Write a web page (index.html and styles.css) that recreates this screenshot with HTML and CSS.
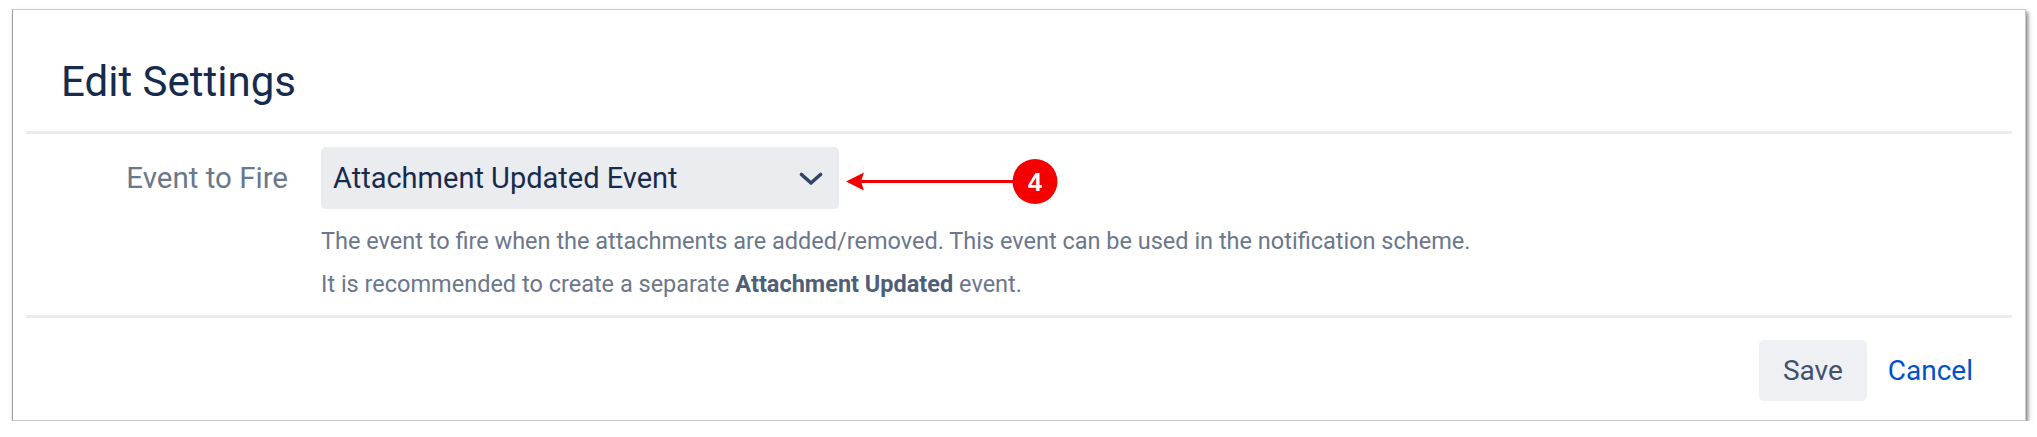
FILE: index.html
```html
<!DOCTYPE html>
<html lang="en">
<head>
<meta charset="utf-8">
<title>Edit Settings</title>
<link rel="stylesheet" href="styles.css">
</head>
<body>
<div class="dialog">
  <header class="dialog-header">
    <h2 class="dialog-title">Edit Settings</h2>
  </header>
  <div class="divider"></div>
  <div class="dialog-body">
    <div class="field-row">
      <label class="field-label">Event to Fire</label>
      <div class="field">
        <div class="select-wrap">
          <div class="select">
            <span class="select-value">Attachment Updated Event</span>
            <svg class="chevron" width="24" height="14" viewBox="0 0 24 14" aria-hidden="true">
              <path d="M2.5 2.5 L12 11 L21.5 2.5" fill="none" stroke="#344563" stroke-width="3.6" stroke-linecap="round" stroke-linejoin="round"/>
            </svg>
          </div>
          <svg class="callout" width="222" height="54" viewBox="0 0 222 54" aria-hidden="true">
            <line x1="16" y1="26.5" x2="172" y2="26.5" stroke="#f20000" stroke-width="3"/>
            <polygon points="4,26.5 22,17.5 19,26.5 22,35.5" fill="#f20000"/>
            <circle cx="193" cy="26.5" r="22.5" fill="#f50000"/>
            <text x="193" y="35.5" text-anchor="middle" class="callout-num">4</text>
          </svg>
        </div>
        <p class="help">The event to fire when the attachments are added/removed. This event can be used in the notification scheme.</p>
        <p class="help">It is recommended to create a separate <strong>Attachment Updated</strong> event.</p>
      </div>
    </div>
  </div>
  <div class="divider"></div>
  <footer class="dialog-footer">
    <button class="btn btn-default">Save</button>
    <button class="btn btn-link">Cancel</button>
  </footer>
</div>
</body>
</html>
```

FILE: styles.css
```css
html, body {
  margin: 0;
  padding: 0;
  background: #ffffff;
}

body {
  padding: 9px 11px 0 12px;
  font-family: Roboto, "Liberation Sans", Arial, sans-serif;
}

.dialog {
  background: #ffffff;
  border: 1px solid #c9c9c9;
  border-left-color: #a0a0a0;
  box-shadow: 2px 3px 4px rgba(0, 0, 0, 0.5);
  display: flex;
  flex-direction: column;
}

.dialog-header {
  padding: 48px 48px 25px 48px;
}

.dialog-title {
  margin: 0;
  font-size: 42px;
  line-height: 48px;
  font-weight: 400;
  color: #172b4d;
}

.divider {
  height: 3px;
  background: #ebecf0;
  margin: 0 13px;
}

.dialog-body {
  padding: 13px 0 9px 0;
}

.field-row {
  display: grid;
  grid-template-columns: 275px 1fr;
  column-gap: 33px;
}

.field-label {
  text-align: right;
  font-size: 29.5px;
  line-height: 62px;
  color: #6b778c;
}

.field {
  display: flex;
  flex-direction: column;
}

.select-wrap {
  position: relative;
  width: 518px;
}

.select {
  height: 62px;
  box-sizing: border-box;
  background: #ebecf0;
  border-radius: 5px;
  padding: 0 16px 0 12px;
  display: flex;
  align-items: center;
  justify-content: space-between;
}

.select-value {
  font-size: 29px;
  color: #172b4d;
}

.chevron {
  display: block;
  margin-top: 2px;
}

.callout {
  position: absolute;
  left: 521px;
  top: 8px;
}

.callout-num {
  font-family: "Liberation Sans", Arial, sans-serif;
  font-weight: 700;
  font-size: 25px;
  fill: #ffffff;
}

.help {
  margin: 0;
  font-size: 23.5px;
  line-height: 43px;
  color: #6b778c;
}

.help:first-of-type {
  margin-top: 11px;
}

.help strong {
  font-weight: 700;
  color: #505f79;
}

.dialog-footer {
  display: flex;
  justify-content: flex-end;
  align-items: center;
  padding: 22px 40px 19px 0;
}

.btn {
  font-family: Roboto, "Liberation Sans", Arial, sans-serif;
  font-size: 28px;
  height: 61px;
  border: none;
  border-radius: 5px;
  cursor: pointer;
  background: transparent;
}

.btn-default {
  background: #eff0f3;
  color: #42526e;
  padding: 0 24px;
}

.btn-link {
  color: #0052cc;
  padding: 0 12px;
  margin-left: 9px;
}
```
